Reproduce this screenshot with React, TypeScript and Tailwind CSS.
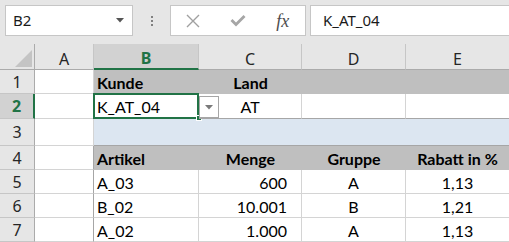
import React from "react";

const CELL_FONT = { fontFamily: "Lato, 'Open Sans', sans-serif" };
const UI_FONT = { fontFamily: "'Noto Sans', 'Open Sans', sans-serif" };

type Row = {
  h: string;
  num: string;
  sel?: boolean;
};

function ColHeader({ label, sel, last }: { label: string; sel?: boolean; last?: boolean }) {
  if (sel) {
    return (
      <div className="flex items-center justify-center bg-[#d2d2d2] border-b-2 border-b-[#217346] border-r border-r-[#c6c6c6] text-[16px] font-bold text-[#217346] pt-[4px]" style={UI_FONT}>
        {label}
      </div>
    );
  }
  return (
    <div
      className={`flex items-center justify-center bg-[#e6e6e6] border-b border-b-[#ababab] ${last ? "" : "border-r border-r-[#c6c6c6]"} text-[16px] text-[#262626] pt-[4px]`}
      style={UI_FONT}
    >
      {label}
    </div>
  );
}

function RowHeader({ num, sel }: { num: string; sel?: boolean }) {
  if (sel) {
    return (
      <div className="flex items-center justify-center bg-[#d2d2d2] border-r-2 border-r-[#217346] border-b border-b-[#c6c6c6] text-[16px] font-bold text-[#217346]" style={UI_FONT}>
        {num}
      </div>
    );
  }
  return (
    <div className="flex items-center justify-center bg-[#e6e6e6] border-r border-r-[#ababab] border-b border-b-[#c6c6c6] text-[16px] text-[#262626]" style={UI_FONT}>
      {num}
    </div>
  );
}

function XIcon() {
  return (
    <svg width="16" height="14" viewBox="0 0 16 14">
      <path d="M2 1 L14 13 M14 1 L2 13" stroke="#a0a0a0" strokeWidth="1.4" fill="none" />
    </svg>
  );
}

function CheckIcon() {
  return (
    <svg width="16" height="12" viewBox="0 0 16 12">
      <path d="M0.5 6 L2.5 4 L6 7.5 L13.5 0 L15.5 2 L6 11.5 Z" fill="#a6a6a6" />
    </svg>
  );
}

export default function App() {
  return (
    <div className="w-[509px] h-[242px] overflow-hidden bg-white">
      {/* Toolbar */}
      <div className="h-[44px] bg-[#e6e6e6] flex items-start pt-[5px]">
        <div className="ml-[5px] w-[128px] h-[31px] bg-white border border-[#c6c6c6] flex items-center justify-between pl-[7px] pr-[8px]">
          <span className="text-[15px] text-[#1a1a1a]" style={UI_FONT}>B2</span>
          <svg width="8" height="5" viewBox="0 0 8 5">
            <path d="M0 0 L8 0 L4 4.5 Z" fill="#555" />
          </svg>
        </div>
        <div className="w-[37px] h-[31px] flex flex-col items-center justify-center gap-[2px]">
          <div className="w-[2px] h-[2px] bg-[#808080]" />
          <div className="w-[2px] h-[2px] bg-[#808080]" />
          <div className="w-[2px] h-[2px] bg-[#808080]" />
        </div>
        <div className="w-[136px] h-[31px] bg-white border border-[#c6c6c6] flex items-center">
          <div className="flex-1 flex items-center justify-center"><XIcon /></div>
          <div className="flex-1 flex items-center justify-center"><CheckIcon /></div>
          <div className="flex-1 flex items-center justify-center">
            <span className="italic text-[18px] text-[#4d4d4d] leading-none" style={{ fontFamily: "'Liberation Serif', serif" }}>fx</span>
          </div>
        </div>
        <div className="ml-[4px] flex-1 h-[31px] bg-white border border-r-0 border-[#c6c6c6] flex items-center pl-[12px]">
          <span className="text-[15px] text-[#1a1a1a]" style={UI_FONT}>K_AT_04</span>
        </div>
      </div>

      {/* Grid */}
      <div
        className="grid grid-cols-[35px_59px_105px_103px_104px_103px] grid-rows-[26px_24px_25px_27px_24px_24px_24px_24px]"
        style={CELL_FONT}
      >
        {/* header row */}
        <div className="relative bg-[#e6e6e6] border-r border-r-[#ababab] border-b border-b-[#ababab]">
          <svg className="absolute left-[15px] top-[6px]" width="17" height="17" viewBox="0 0 17 17">
            <path d="M17 0 L17 17 L0 17 Z" fill="#c4c4c4" />
          </svg>
        </div>
        <ColHeader label="A" />
        <ColHeader label="B" sel />
        <ColHeader label="C" />
        <ColHeader label="D" />
        <ColHeader label="E" last />

        {/* row 1 */}
        <RowHeader num="1" />
        <div className="bg-white border-r border-r-[#d4d4d4] border-b border-b-[#d4d4d4]" />
        <div className="bg-[#bfbfbf] flex items-center pl-[3px] pt-[2px] text-[16px] font-bold text-black">Kunde</div>
        <div className="bg-[#bfbfbf] flex items-center justify-center pt-[2px] text-[16px] font-bold text-black">Land</div>
        <div className="bg-[#bfbfbf]" />
        <div className="bg-[#bfbfbf]" />

        {/* row 2 */}
        <RowHeader num="2" sel />
        <div className="bg-white border-r border-r-[#d4d4d4] border-b border-b-[#d4d4d4]" />
        <div className="relative bg-white border-b border-b-[#a6a6a6] flex items-center pl-[3px] pt-[2px] text-[16px] text-black">
          K_AT_04
          <div className="absolute left-[-1px] top-[-1px] right-0 bottom-[-1px] border-2 border-[#217346]" />
          <div className="absolute right-[-3px] bottom-[-3px] w-[6px] h-[6px] bg-[#217346] border border-white" />
        </div>
        <div className="relative bg-white border-r border-r-[#d4d4d4] border-b border-b-[#a6a6a6] flex items-center justify-center pt-[2px] text-[16px] text-black">
          AT
          <div className="absolute left-0 top-[2px] w-[20px] h-[22px] bg-white border border-[#a6a6a6] flex items-center justify-center">
            <svg width="8" height="5" viewBox="0 0 8 5">
              <path d="M0 0 L8 0 L4 4.5 Z" fill="#7a7a7a" />
            </svg>
          </div>
        </div>
        <div className="bg-white border-r border-r-[#d4d4d4] border-b border-b-[#a6a6a6]" />
        <div className="bg-white border-b border-b-[#a6a6a6]" />

        {/* row 3 */}
        <RowHeader num="3" />
        <div className="bg-white border-r border-r-[#d4d4d4] border-b border-b-[#d4d4d4]" />
        <div className="bg-[#dce6f1] border-b border-b-[#a6a6a6]" />
        <div className="bg-[#dce6f1] border-b border-b-[#a6a6a6]" />
        <div className="bg-[#dce6f1] border-b border-b-[#a6a6a6]" />
        <div className="bg-[#dce6f1] border-b border-b-[#a6a6a6]" />

        {/* row 4 */}
        <RowHeader num="4" />
        <div className="bg-white border-r border-r-[#a6a6a6] border-b border-b-[#d4d4d4]" />
        <div className="bg-[#bfbfbf] flex items-center pl-[3px] pt-[2px] text-[16px] font-bold text-black">Artikel</div>
        <div className="bg-[#bfbfbf] flex items-center justify-center pt-[2px] text-[16px] font-bold text-black">Menge</div>
        <div className="bg-[#bfbfbf] flex items-center justify-center pt-[2px] text-[16px] font-bold text-black">Gruppe</div>
        <div className="bg-[#bfbfbf] flex items-center justify-center pt-[2px] text-[16px] font-bold text-black">Rabatt in %</div>

        {[
          ["5", "A_03", "600", "A", "1,13"],
          ["6", "B_02", "10.001", "B", "1,21"],
          ["7", "A_02", "1.000", "A", "1,13"],
        ].map(([n, art, menge, grp, rab]) => (
          <React.Fragment key={n}>
            <RowHeader num={n} />
            <div className="bg-white border-r border-r-[#a6a6a6] border-b border-b-[#d4d4d4]" />
            <div className="bg-white border-r border-r-[#d4d4d4] border-b border-b-[#d4d4d4] flex items-center pl-[3px] pt-[2px] text-[16px] text-black">{art}</div>
            <div className="bg-white border-r border-r-[#d4d4d4] border-b border-b-[#d4d4d4] flex items-center justify-end pr-[14px] pt-[2px] text-[16px] text-black">{menge}</div>
            <div className="bg-white border-r border-r-[#d4d4d4] border-b border-b-[#d4d4d4] flex items-center justify-center pt-[2px] text-[16px] text-black">{grp}</div>
            <div className="bg-white border-b border-b-[#d4d4d4] flex items-center justify-center pt-[2px] text-[16px] text-black">{rab}</div>
          </React.Fragment>
        ))}
      </div>
    </div>
  );
}
